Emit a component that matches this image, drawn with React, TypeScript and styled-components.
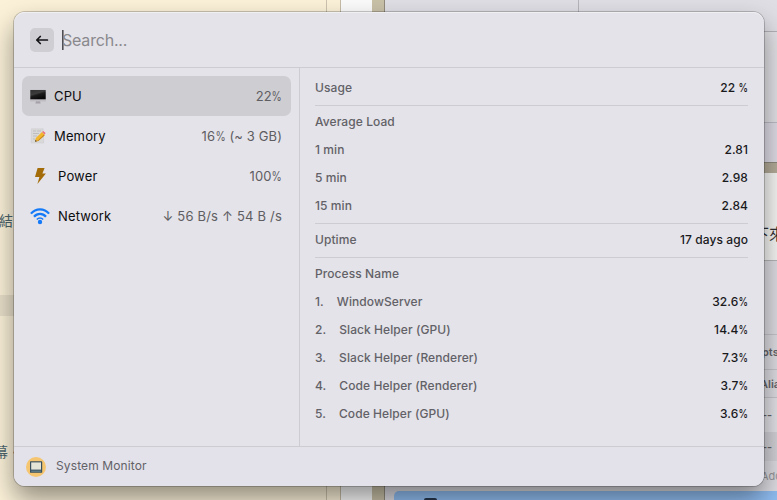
import React from "react";
import styled, { createGlobalStyle } from "styled-components";

const Global = createGlobalStyle`
  * { box-sizing: border-box; }
  body { margin: 0; overflow: hidden; }
`;

const Desktop = styled.div`
  display: grid;
  width: 777px;
  height: 500px;
  overflow: hidden;
  font-family: Inter, "Noto Sans CJK TC", sans-serif;
`;

const Backdrop = styled.div`
  grid-area: 1 / 1;
  display: flex;
  height: 500px;
  overflow: hidden;
`;

const NotesColumn = styled.div`
  width: 327px;
  flex: none;
  display: flex;
  flex-direction: column;
  background: #fbf1d8;
  border-right: 1px solid #cbc3ae;
  color: #4b646c;
  font-size: 14px;
  line-height: 20px;
`;

const NotesLine = styled.div<{ $h: number; $marked?: boolean; $scroll?: number }>`
  height: ${(p) => p.$h}px;
  flex: none;
  display: flex;
  align-items: flex-end;
  text-indent: ${(p) => -(p.$scroll ?? 0)}px;
  background: ${(p) => (p.$marked ? "#e8dfc9" : "transparent")};
`;

const Strip = styled.div<{ $w: number; $bg: string; $edge?: string }>`
  width: ${(p) => p.$w}px;
  flex: none;
  background: ${(p) => p.$bg};
  border-right: ${(p) => (p.$edge ? `1px solid ${p.$edge}` : "none")};
`;

const StackColumn = styled.div`
  flex: 1;
  min-width: 0;
  display: flex;
  flex-direction: column;
  background: #dddce2;
`;

const Band = styled.div<{ $h: number; $bg: string; $line?: string; $indent?: number }>`
  height: ${(p) => p.$h}px;
  flex: none;
  display: flex;
  align-items: center;
  padding-left: ${(p) => p.$indent ?? 0}px;
  background: ${(p) => p.$bg};
  border-top: ${(p) => (p.$line ? `1px solid ${p.$line}` : "none")};
  color: #656469;
  font-size: 11px;
  font-weight: 600;
  white-space: nowrap;
`;

const LargeText = styled.span`
  color: #303033;
  font-size: 16px;
  font-weight: 400;
  padding-top: 32px;
`;

const FaintText = styled.span`
  color: #96959a;
  font-weight: 400;
`;

const TabDivider = styled.i`
  width: 1px;
  height: 31px;
  background: #b5b4b9;
`;

const BlueBar = styled.div`
  height: 10px;
  flex: none;
  margin-left: 9px;
  padding: 7px 0 0 30px;
  border-radius: 5px 0 0 0;
  background: #8fbcf0;
`;

const BlueBarIcon = styled.div`
  width: 13px;
  height: 5px;
  border-radius: 2px;
  background: #26364c;
`;

const Window = styled.main`
  grid-area: 1 / 1;
  z-index: 1;
  width: 750px;
  height: 474px;
  margin: 12px 0 0 14px;
  display: flex;
  flex-direction: column;
  border-radius: 11px;
  background: #e4e3e9;
  box-shadow: 0 0 0 1px rgba(0, 0, 0, 0.2), 0 13px 26px rgba(0, 0, 0, 0.42);
`;

const SearchBar = styled.header`
  height: 56px;
  flex: none;
  display: flex;
  align-items: center;
  padding: 0 16px;
  border-radius: 11px 11px 0 0;
  border-bottom: 1px solid #cdccd2;
  box-shadow: inset 0 1px 0 #f0f0f3;
`;

const BackButton = styled.button`
  width: 24px;
  height: 24px;
  padding: 0;
  border: 0;
  border-radius: 5px;
  background: #cfced3;
  display: grid;
  place-items: center;
`;

const Caret = styled.i`
  width: 2px;
  height: 20px;
  margin: 0 -2px 0 8px;
  background: linear-gradient(90deg, #4e4e53 50%, #8b8a90 50%);
`;

const Placeholder = styled.span`
  font-size: 16px;
  line-height: 20px;
  letter-spacing: -0.2px;
  color: #8a898e;
`;

const Body = styled.div`
  flex: 1;
  min-height: 0;
  display: flex;
`;

const Sidebar = styled.nav`
  width: 286px;
  padding: 8px;
  border-right: 1px solid #cdccd2;
`;

const Item = styled.div<{ $active?: boolean }>`
  height: 40px;
  padding: 0 9px 0 8px;
  display: flex;
  align-items: center;
  border-radius: 7px;
  background: ${(p) => (p.$active ? "#cecdd2" : "transparent")};
`;

const ItemIcon = styled.span<{ $w: number }>`
  width: ${(p) => p.$w}px;
  display: flex;
`;

const ItemName = styled.span`
  flex: 1;
  font-size: 13px;
  letter-spacing: 0.15px;
  color: #0c0c0e;
`;

const ItemValue = styled.span<{ $track: number }>`
  font-size: 13px;
  letter-spacing: ${(p) => p.$track}px;
  color: #5e5d62;
  white-space: pre;
`;

const Percent = styled.span`
  display: inline-block;
  margin-left: -2.4px;
  transform: scaleX(0.8);
  transform-origin: right center;
`;

const Detail = styled.section`
  flex: 1;
  padding: 6px 16px 0 15px;
`;

const Group = styled.div`
  padding-bottom: 3px;
  margin-bottom: 2px;
  border-bottom: 1px solid #cdccd2;
  &:last-child { border-bottom: 0; }
`;

const Row = styled.div`
  height: 28px;
  padding-bottom: 2px;
  display: flex;
  align-items: center;
  font-size: 12px;
  font-weight: 500;
  letter-spacing: 0.08px;
`;

const Label = styled.span`
  flex: 1;
  color: #626167;
`;

const Rank = styled.span`
  margin-right: 13px;
`;

const Value = styled.span`
  color: #1a1a1d;
  font-weight: 450;
`;

const Footer = styled.footer`
  height: 40px;
  flex: none;
  display: flex;
  align-items: center;
  gap: 10px;
  padding: 0 12px;
  border-top: 1px solid #cdccd2;
  border-radius: 0 0 11px 11px;
  background: #e3e1ea;
`;

const FooterTitle = styled.span`
  padding-bottom: 2px;
  color: #626167;
  font-size: 12px;
  letter-spacing: 0.12px;
`;

const MonitorIcon = () => (
  <svg width="16" height="16" viewBox="0 0 16 16">
    <defs>
      <linearGradient id="screen" x1="0" y1="0" x2="0.5" y2="1">
        <stop offset="0" stopColor="#303030" />
        <stop offset="0.45" stopColor="#3c3c3c" />
        <stop offset="0.6" stopColor="#1c1c1c" />
        <stop offset="1" stopColor="#080808" />
      </linearGradient>
    </defs>
    <path d="M6 13h4l.6 2.4H5.4z" fill="#a5a0aa" />
    <rect x="0" y="1.8" width="16" height="11.6" rx=".6" fill="#bfbcc2" />
    <rect x=".3" y="2" width="15.4" height="9.3" fill="url(#screen)" />
  </svg>
);

const MemoIcon = () => (
  <svg width="16" height="16" viewBox="0 0 16 16">
    <path d="M1.5.8h11.6l.6 14.2H1.2z" fill="#d9d9da" stroke="#c9c9cc" strokeWidth=".5" />
    <path d="M3 3h3m1 0h4M3 5.5h6M3 8h4m-4 3h2" stroke="#b2b2b6" strokeWidth=".7" />
    <path d="M5 13.8l.8-3.7L12 3.9l2.7 2.5-6.3 6.3z" fill="#f3b72d" />
    <path d="M7.5 12.8l6.4-6.2.8.8-6.3 5.5-3.4.9z" fill="#c9851a" />
    <path d="M12 3.9l1.2-.9 2.4 2-.9 1.4z" fill="#ed7180" />
    <path d="M5 13.8l.5-2 1.4 1.5z" fill="#4c4038" />
  </svg>
);

const BoltIcon = () => (
  <svg width="20" height="18" viewBox="0 0 20 18">
    <path d="M7.6 1h7l-2.2 5.4h3.5L7.4 17l2-6.9H5z" fill="#a36c09" />
  </svg>
);

const WifiIcon = () => (
  <svg width="20" height="18" viewBox="0 0 20 18" fill="none" stroke="#147af8" strokeWidth="2.2">
    <path d="M.9 6.6Q4.6 2.3 10 2.3t9.1 4.3" />
    <path d="M4 9.8Q6.5 6.9 10 6.9t6 2.9" />
    <path d="M6.8 12.6Q8.2 11 10 11t3.2 1.6" strokeWidth="1.5" />
    <circle cx="10" cy="15" r="2.2" fill="#147af8" stroke="none" />
  </svg>
);

const AppIcon = () => (
  <svg width="20" height="20" viewBox="0 0 20 20">
    <circle cx="10" cy="10" r="10" fill="#f5c66f" />
    <rect x="4" y="4.3" width="12.2" height="11.5" rx=".6" fill="#39505e" />
    <rect x="5.2" y="5.4" width="9.8" height="7.2" fill="#e5e5d7" />
    <path d="M5.2 14.2h9.8" stroke="#7899a2" strokeWidth=".8" />
  </svg>
);

const ArrowIcon = () => (
  <svg width="14" height="12" viewBox="0 0 14 12" fill="none" stroke="#151518" strokeWidth="1.7" strokeLinecap="round" strokeLinejoin="round">
    <path d="M12.4 6H1.8m3.5-3.5L1.8 6l3.5 3.5" />
  </svg>
);

const items = [
  { name: "CPU", value: "22%", icon: <MonitorIcon />, w: 24, track: 0 },
  { name: "Memory", value: "16% (~ 3 GB)", icon: <MemoIcon />, w: 24, track: 0.12 },
  { name: "Power", value: "100%", icon: <BoltIcon />, w: 28, track: 0.1 },
  { name: "Network", value: "↓ 56 B/s ↑ 54 B /s", icon: <WifiIcon />, w: 28, track: 0.2 },
];

const groups: { label: string; value?: string; rank?: number }[][] = [
  [{ label: "Usage", value: "22 %" }],
  [
    { label: "Average Load" },
    { label: "1 min", value: "2.81" },
    { label: "5 min", value: "2.98" },
    { label: "15 min", value: "2.84" },
  ],
  [{ label: "Uptime", value: "17 days ago" }],
  [
    { label: "Process Name" },
    { label: "WindowServer", value: "32.6%", rank: 1 },
    { label: "Slack Helper (GPU)", value: "14.4%", rank: 2 },
    { label: "Slack Helper (Renderer)", value: "7.3%", rank: 3 },
    { label: "Code Helper (Renderer)", value: "3.7%", rank: 4 },
    { label: "Code Helper (GPU)", value: "3.6%", rank: 5 },
  ],
];

const Figure = ({ text }: { text: string }) => {
  const [before, after] = text.split("%");
  return after === undefined ? <>{text}</> : <>{before}<Percent>%</Percent>{after}</>;
};

export default function App() {
  return (
    <Desktop>
      <Global />
      <Backdrop>
        <NotesColumn>
          <NotesLine $h={231} $scroll={1}>結</NotesLine>
          <NotesLine $h={64} />
          <NotesLine $h={21} $marked />
          <NotesLine $h={146} $scroll={6}>幕・</NotesLine>
        </NotesColumn>
        <Strip $w={14} $bg="#fbf1d8" $edge="#c5bca6" />
        <Strip $w={31} $bg="#fafafa" />
        <Strip $w={13} $bg="#c9c0a8" $edge="#918b7c" />
        <StackColumn>
          <Band $h={31} $bg="#dfdee4" $indent={193}><TabDivider /></Band>
          <Band $h={91} $bg="#e2e1e5" $line="#b2b1b7" />
          <Band $h={40} $bg="#dedbe5" $line="#bdbbc4" />
          <Band $h={11} $bg="#b3ab98" $line="#8e897c" />
          <Band $h={87} $bg="#f5f5f4" $indent={368}><LargeText>下來</LargeText></Band>
          <Band $h={74} $bg="#dddce2" $line="#b5b4b8" />
          <Band $h={35} $bg="#dddce1" $line="#c5c4c9" $indent={377}>pts</Band>
          <Band $h={28} $bg="#dddce1" $line="#c5c4c9" $indent={375}>Alia</Band>
          <Band $h={35} $bg="#e2e1e5" $line="#c5c4c9" $indent={377}>--</Band>
          <Band $h={29} $bg="#d2d1d6" $indent={377}>--</Band>
          <Band $h={30} $bg="#dddce2" $indent={376}><FaintText>Add</FaintText></Band>
          <BlueBar><BlueBarIcon /></BlueBar>
        </StackColumn>
      </Backdrop>
      <Window>
        <SearchBar>
          <BackButton aria-label="Back"><ArrowIcon /></BackButton>
          <Caret />
          <Placeholder>Search...</Placeholder>
        </SearchBar>
        <Body>
          <Sidebar>
            {items.map((it, i) => (
              <Item key={it.name} $active={i === 0}>
                <ItemIcon $w={it.w}>{it.icon}</ItemIcon>
                <ItemName>{it.name}</ItemName>
                <ItemValue $track={it.track}><Figure text={it.value} /></ItemValue>
              </Item>
            ))}
          </Sidebar>
          <Detail>
            {groups.map((rows) => (
              <Group key={rows[0].label}>
                {rows.map((r) => (
                  <Row key={r.label}>
                    <Label>
                      {r.rank && <Rank>{r.rank}.</Rank>}
                      {r.label}
                    </Label>
                    {r.value && <Value><Figure text={r.value} /></Value>}
                  </Row>
                ))}
              </Group>
            ))}
          </Detail>
        </Body>
        <Footer>
          <AppIcon />
          <FooterTitle>System Monitor</FooterTitle>
        </Footer>
      </Window>
    </Desktop>
  );
}
